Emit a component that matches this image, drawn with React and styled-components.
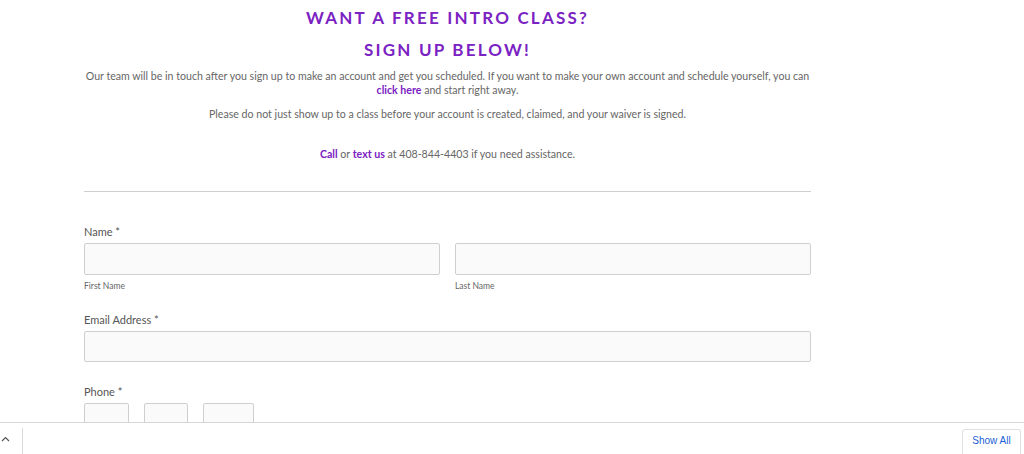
import styled, { createGlobalStyle } from "styled-components";

const GlobalStyle = createGlobalStyle`
  html, body {
    margin: 0;
    padding: 0;
    background: #fff;
    font-family: Lato, "Open Sans", Arial, sans-serif;
  }
`;

const Page = styled.div`
  width: 727px;
  margin-left: 84px;
  padding-top: 8px;
  padding-bottom: 60px;
`;

const Heading = styled.h2`
  margin: 0 0 ${(p) => p.$gap || 0}px;
  text-align: center;
  color: #7a22c2;
  font-size: 17px;
  line-height: 20px;
  font-weight: 700;
  letter-spacing: 2.2px;
`;

const Text = styled.p`
  margin: 0 0 ${(p) => p.$gap || 0}px;
  text-align: center;
  color: #666;
  font-size: 10.6px;
  line-height: 14px;
`;

const Link = styled.a`
  color: #7a22c2;
  font-weight: 700;
  text-decoration: none;
`;

const Rule = styled.hr`
  margin: 30px 0 33px;
  border: 0;
  border-top: 1px solid #cfcfcf;
`;

const Field = styled.div`
  margin-bottom: ${(p) => p.$gap || 0}px;
`;

const Label = styled.div`
  color: #555;
  font-size: 11px;
  line-height: 14px;
  margin-bottom: 4px;
`;

const Row = styled.div`
  display: flex;
  gap: 15px;
`;

const Col = styled.div`
  flex: 1;
  display: flex;
  flex-direction: column;
`;

const Input = styled.div`
  box-sizing: border-box;
  height: ${(p) => p.$h || 32}px;
  width: ${(p) => (p.$w ? `${p.$w}px` : "100%")};
  background: #fafafa;
  border: 1px solid #cfcfcf;
  border-radius: 2px;
`;

const SubLabel = styled.div`
  color: #666;
  font-size: 8.5px;
  line-height: 11px;
  margin-top: 6px;
`;

const DownloadBar = styled.div`
  position: fixed;
  left: 0;
  right: 0;
  bottom: 0;
  height: 31px;
  background: #fff;
  border-top: 1px solid #d6d6d6;
  display: flex;
  align-items: stretch;
`;

const Chevron = styled.div`
  width: 21px;
  display: flex;
  align-items: center;
  padding-left: 1px;
  color: #555;
`;

const Divider = styled.div`
  width: 1px;
  background: #d9d9d9;
  margin-top: 5px;
`;

const Spacer = styled.div`
  flex: 1;
`;

const ShowAll = styled.div`
  margin-top: 6px;
  width: 57px;
  margin-right: 3px;
  border: 1px solid #e0e0e0;
  border-bottom: 0;
  border-radius: 3px 3px 0 0;
  color: #1a5fd6;
  font-family: "Liberation Sans", Arial, sans-serif;
  font-size: 10px;
  display: flex;
  align-items: center;
  justify-content: center;
  padding-bottom: 4px;
`;

export default function App() {
  return (
    <>
      <GlobalStyle />
      <Page>
        <Heading $gap={12}>WANT A FREE INTRO CLASS?</Heading>
        <Heading $gap={9}>SIGN UP BELOW!</Heading>
        <Text $gap={10}>
          Our team will be in touch after you sign up to make an account and get you scheduled. If you want to make your
          own account and schedule yourself, you can <Link href="#">click here</Link> and start right away.
        </Text>
        <Text $gap={26}>Please do not just show up to a class before your account is created, claimed, and your waiver is signed.</Text>
        <Text>
          <Link href="#">Call</Link> or <Link href="#">text us</Link> at 408-844-4403 if you need assistance.
        </Text>
        <Rule />
        <Field $gap={21}>
          <Label>Name *</Label>
          <Row>
            <Col>
              <Input />
              <SubLabel>First Name</SubLabel>
            </Col>
            <Col>
              <Input />
              <SubLabel>Last Name</SubLabel>
            </Col>
          </Row>
        </Field>
        <Field $gap={23}>
          <Label>Email Address *</Label>
          <Input $h={31} />
        </Field>
        <Field>
          <Label>Phone *</Label>
          <Row>
            <Input $w={45} />
            <Input $w={44} />
            <Input $w={51} />
          </Row>
        </Field>
      </Page>
      <DownloadBar>
        <Chevron>
          <svg width="9" height="6" viewBox="0 0 9 6" fill="none" stroke="#555" strokeWidth="1.2">
            <path d="M1 5 L4.5 1.5 L8 5" />
          </svg>
        </Chevron>
        <Divider />
        <Spacer />
        <ShowAll>Show All</ShowAll>
      </DownloadBar>
    </>
  );
}
